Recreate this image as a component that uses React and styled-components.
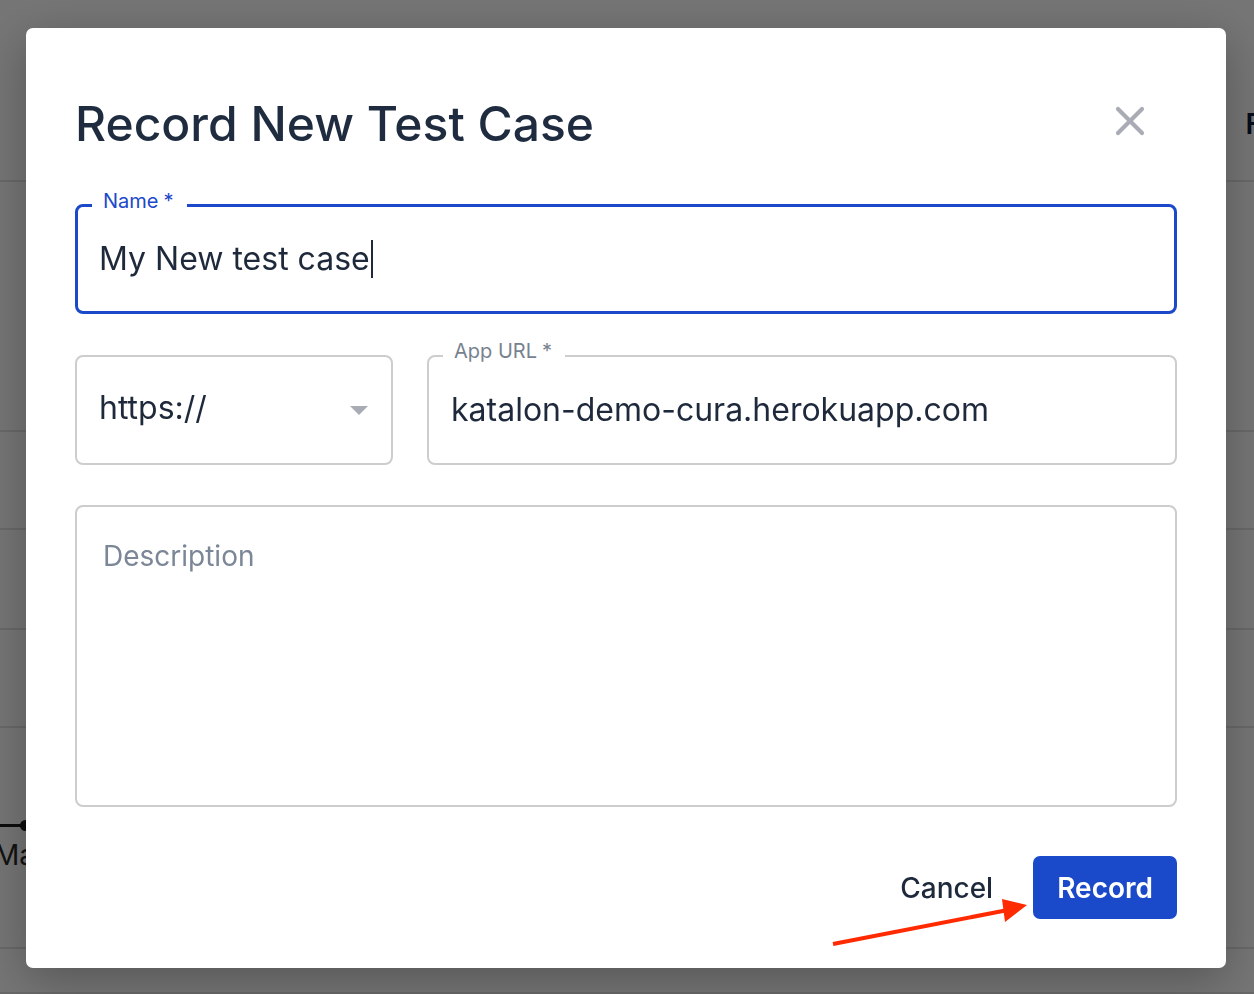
import React from "react";
import styled, { createGlobalStyle } from "styled-components";

const Global = createGlobalStyle`
  html, body { margin: 0; padding: 0; }
  body { font-family: Inter, "Noto Sans", sans-serif; background: #fff; }
  * { box-sizing: border-box; }
`;

/* ---------- background page ---------- */
const Page = styled.div`
  width: 1254px;
  height: 994px;
  overflow: hidden;
  background: #ffffff;
  display: flex;
  flex-direction: column;
`;

const TopBar = styled.header`
  height: 182px;
  flex: none;
  border-bottom: 2px solid #e3e3e3;
  display: flex;
  align-items: flex-start;
  justify-content: flex-end;
  padding-top: 107px;
`;

const TopBarText = styled.span`
  font-size: 28px;
  line-height: 34px;
  font-weight: 600;
  color: #0f1b3a;
  margin-right: -8px;
`;

const Row = styled.div`
  height: ${(p) => p.$h}px;
  flex: none;
  border-bottom: 2px solid #e3e3e3;
  display: flex;
  flex-direction: column;
  align-items: flex-start;
`;

const Timeline = styled.div`
  display: flex;
  align-items: center;
  margin-top: 92px;
`;

const TimelineLine = styled.div`
  height: 3px;
  width: 22px;
  background: #1c1c1c;
`;

const TimelineDot = styled.div`
  width: 11px;
  height: 11px;
  border-radius: 50%;
  background: #1c1c1c;
  margin-left: -2px;
`;

const TimelineLabel = styled.div`
  font-size: 28px;
  line-height: 34px;
  color: #2a2a2a;
  margin-left: -6px;
  margin-top: 7px;
`;

/* ---------- modal ---------- */
const Backdrop = styled.div`
  position: fixed;
  inset: 0;
  background: rgba(0, 0, 0, 0.54);
  display: flex;
  align-items: center;
  justify-content: center;
  padding: 2px 2px 0 0;
`;

const Modal = styled.div`
  position: relative;
  width: 1200px;
  height: 940px;
  background: #ffffff;
  border-radius: 7px;
  box-shadow: 0 12px 48px rgba(0, 0, 0, 0.28);
  padding: 0 49px 49px;
  display: flex;
  flex-direction: column;
`;

const Header = styled.div`
  height: 96px;
  flex: none;
  margin-top: 48px;
  display: flex;
  align-items: center;
  justify-content: space-between;
`;

const Title = styled.h2`
  margin: 0;
  font-size: 48px;
  font-weight: 500;
  color: #1f2c40;
  line-height: 1.2;
  letter-spacing: 0px;
`;

const CloseButton = styled.button`
  width: 48px;
  height: 48px;
  border: none;
  background: transparent;
  padding: 0;
  margin-right: 23px;
  margin-top: -6px;
  display: flex;
  align-items: center;
  justify-content: center;
  cursor: pointer;
`;

const Form = styled.div`
  display: flex;
  flex-direction: column;
  margin-top: 32px;
`;

const Field = styled.div`
  position: relative;
  height: ${(p) => p.$h}px;
  width: ${(p) => (p.$w ? `${p.$w}px` : "auto")};
  flex: ${(p) => (p.$grow ? "1 1 auto" : "none")};
  border: ${(p) => (p.$focused ? "3px solid #1b49c9" : "2px solid #cdcdcd")};
  border-radius: 8px;
  margin-top: ${(p) => p.$mt || 0}px;
  display: flex;
  align-items: ${(p) => (p.$top ? "flex-start" : "center")};
  justify-content: space-between;
  padding: ${(p) => p.$pad};
`;

const FloatLabel = styled.label`
  position: absolute;
  top: -18px;
  left: 14px;
  padding: 0 13px 0 11px;
  background: #fff;
  font-size: 20px;
  line-height: 24px;
  color: ${(p) => (p.$focused ? "#1b49c9" : "#78828f")};
`;

const Star = styled.span`
  margin-left: 5px;
`;

const Value = styled.div`
  font-size: 32px;
  color: #1e293b;
  line-height: 1.2;
  display: flex;
  align-items: center;
  white-space: nowrap;
  margin-top: ${(p) => p.$mt || 0}px;
`;

const Caret = styled.span`
  display: inline-block;
  width: 2px;
  height: 38px;
  background: #1e293b;
  margin-left: 1px;
`;

const Placeholder = styled.div`
  font-size: 28px;
  line-height: 34px;
  color: #7b8696;
`;

const FieldRow = styled.div`
  display: flex;
  gap: 34px;
  margin-top: 41px;
`;

const Footer = styled.div`
  margin-top: 49px;
  display: flex;
  justify-content: flex-end;
  align-items: center;
  gap: 40px;
`;

const TextButton = styled.button`
  border: none;
  background: transparent;
  padding: 0;
  font-family: inherit;
  font-size: 28px;
  font-weight: 500;
  color: #1e293b;
  cursor: pointer;
`;

const PrimaryButton = styled.button`
  height: 63px;
  padding: 0 24px;
  border: none;
  border-radius: 7px;
  background: #1a4aca;
  color: #ffffff;
  font-family: inherit;
  font-size: 28px;
  font-weight: 600;
  cursor: pointer;
`;

const ArrowSvg = styled.svg`
  position: absolute;
  left: 800px;
  top: 865px;
  overflow: visible;
  pointer-events: none;
`;

export default function App() {
  return (
    <>
      <Global />
      <Page>
        <TopBar>
          <TopBarText>F</TopBarText>
        </TopBar>
        <Row $h={250} />
        <Row $h={98} />
        <Row $h={100} />
        <Row $h={98} />
        <Row $h={221}>
          <Timeline>
            <TimelineLine />
            <TimelineDot />
          </Timeline>
          <TimelineLabel>Ma</TimelineLabel>
        </Row>
        <Row $h={45} />
      </Page>
      <Backdrop>
        <Modal>
          <Header>
            <Title>Record New Test Case</Title>
            <CloseButton aria-label="Close">
              <svg width="30" height="30" viewBox="0 0 30 30">
                <path
                  d="M3 3 L27 27 M27 3 L3 27"
                  stroke="#a9acb5"
                  strokeWidth="4.2"
                  strokeLinecap="round"
                  fill="none"
                />
              </svg>
            </CloseButton>
          </Header>
          <Form>
            <Field $h={110} $focused $pad="0 21px">
              <FloatLabel $focused>
                Name<Star>*</Star>
              </FloatLabel>
              <Value>
                My New test case
                <Caret />
              </Value>
            </Field>
            <FieldRow>
              <Field $h={110} $w={318} $pad="0 23px 0 22px">
                <Value $mt={-4}>https://</Value>
                <svg width="18" height="9" viewBox="0 0 18 9">
                  <path d="M0 0 L18 0 L9 9 Z" fill="#a9acb5" />
                </svg>
              </Field>
              <Field $h={110} $grow $pad="0 22px">
                <FloatLabel>
                  App URL<Star>*</Star>
                </FloatLabel>
                <Value>katalon-demo-cura.herokuapp.com</Value>
              </Field>
            </FieldRow>
            <Field $h={302} $mt={40} $top $pad="32px 26px">
              <Placeholder>Description</Placeholder>
            </Field>
          </Form>
          <Footer>
            <TextButton>Cancel</TextButton>
            <PrimaryButton>Record</PrimaryButton>
          </Footer>
          <ArrowSvg width="210" height="60" viewBox="0 0 210 60">
            <line
              x1="7"
              y1="51"
              x2="182"
              y2="17"
              stroke="#ff2a00"
              strokeWidth="4"
            />
            <polygon points="201,12 176,6 179,29" fill="#ff2a00" />
          </ArrowSvg>
        </Modal>
      </Backdrop>
    </>
  );
}
